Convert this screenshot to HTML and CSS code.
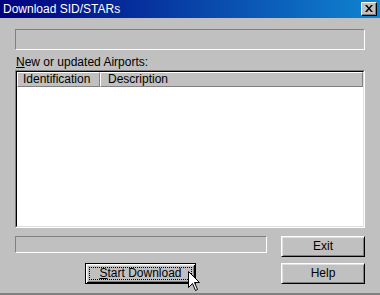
FILE: index.html
```html
<!DOCTYPE html>
<html>
<head>
<meta charset="utf-8">
<link rel="stylesheet" href="styles.css">
</head>
<body>
<div class="window">
  <div class="titlebar">
    <span class="title">Download SID/STARs</span>
    <span class="close"><svg width="8" height="7" viewBox="0 0 8 7"><path d="M0 0h2l2 2.5L6 0h2L5 3.5 8 7H6L4 4.5 2 7H0l3-3.5z" fill="#000"/></svg></span>
  </div>
  <div class="content">
    <div class="field top-field"></div>
    <div class="label"><u>N</u>ew or updated Airports:</div>
    <div class="listview">
      <div class="header">
        <div class="col col-id">Identification</div>
        <div class="col col-desc">Description</div>
      </div>
      <div class="list-body"></div>
    </div>
    <div class="bottom">
      <div class="field bottom-field"></div>
      <button class="btn">Exit</button>
      <div class="start-cell">
        <button class="btn default"><span class="focus"><u>S</u>tart Download</span></button>
      </div>
      <button class="btn">Help</button>
    </div>
  </div>
  <svg class="cursor" width="13" height="21" viewBox="0 0 13 21"><path d="M0.5 0.5V16.5L4.5 12.5L7.5 19.5L9.5 18.5L6.5 11.5H11.5Z" fill="#fff" stroke="#000" stroke-width="1"/></svg>
</div>
</body>
</html>
```
FILE: styles.css
```css
* { box-sizing: border-box; }
html, body { margin: 0; padding: 0; }
body {
  background: #c0c0c0;
  font-family: "Liberation Sans", Arial, sans-serif;
  font-size: 12px;
  color: #000;
}
.window {
  position: relative;
  width: 380px;
  height: 295px;
  background: #c0c0c0;
  border-bottom: 2px solid #808080;
  display: flex;
  flex-direction: column;
  overflow: hidden;
}
.titlebar {
  height: 18px;
  background: linear-gradient(to right, #000080, #1084d0);
  display: flex;
  align-items: center;
  justify-content: space-between;
  padding: 0 3px 0 3px;
}
.title {
  color: #fff;
  font-size: 12px;
  line-height: 18px;
}
.close {
  width: 16px;
  height: 14px;
  background: #c0c0c0;
  border-top: 1px solid #fff;
  border-left: 1px solid #fff;
  border-right: 1px solid #000;
  border-bottom: 1px solid #000;
  box-shadow: inset -1px -1px 0 #808080;
  display: flex;
  align-items: center;
  justify-content: center;
  padding-bottom: 1px;
}
.content {
  padding: 0 15px;
  display: flex;
  flex-direction: column;
}
.field {
  border-top: 1px solid #808080;
  border-left: 1px solid #808080;
  border-right: 1px solid #fff;
  border-bottom: 1px solid #fff;
}
.top-field {
  margin-top: 11px;
  height: 21px;
}
.label {
  margin-top: 5px;
  height: 15px;
  line-height: 14px;
  padding-left: 1px;
}
.listview {
  height: 158px;
  border-top: 1px solid #808080;
  border-left: 1px solid #808080;
  border-right: 1px solid #fff;
  border-bottom: 1px solid #fff;
  display: flex;
  flex-direction: column;
}
.listview > * { }
.header {
  display: flex;
  border-top: 1px solid #000;
  border-left: 1px solid #000;
  border-right: 1px solid #dfdfdf;
  height: 16px;
}
.col {
  height: 15px;
  line-height: 13px;
  background: #c0c0c0;
  border-top: 1px solid #fff;
  border-left: 1px solid #fff;
  border-right: 1px solid #808080;
  border-bottom: 1px solid #808080;
  padding-left: 5px;
}
.col-id { width: 83px; }
.col-desc { flex: 1; padding-left: 7px; }
.list-body {
  flex: 1;
  background: #fff;
  border-left: 1px solid #000;
  border-right: 1px solid #dfdfdf;
  border-bottom: 1px solid #dfdfdf;
}
.bottom {
  margin-top: 8px;
  display: grid;
  grid-template-columns: 252px 84px;
  grid-template-rows: 21px 21px;
  column-gap: 14px;
  row-gap: 6px;
}
.bottom-field {
  height: 17px;
}
.btn {
  font-family: "Liberation Sans", Arial, sans-serif;
  font-size: 12px;
  color: #000;
  background: #c0c0c0;
  height: 21px;
  padding: 0;
  margin: 0;
  border-top: 1px solid #fff;
  border-left: 1px solid #fff;
  border-right: 1px solid #000;
  border-bottom: 1px solid #000;
  box-shadow: inset 1px 1px 0 #dfdfdf, inset -1px -1px 0 #808080;
  line-height: 17px;
  text-align: center;
}
.start-cell {
  padding-left: 70px;
}
.btn.default {
  width: 111px;
  border: 1px solid #000;
  box-shadow: inset 1px 1px 0 #fff, inset -1px -1px 0 #000, inset 2px 2px 0 #dfdfdf, inset -2px -2px 0 #808080;
  padding: 3px;
}
.focus {
  display: block;
  height: 13px;
  line-height: 11px;
  border: 1px dotted #000;
}
.cursor {
  position: absolute;
  left: 188px;
  top: 271px;
}
```
